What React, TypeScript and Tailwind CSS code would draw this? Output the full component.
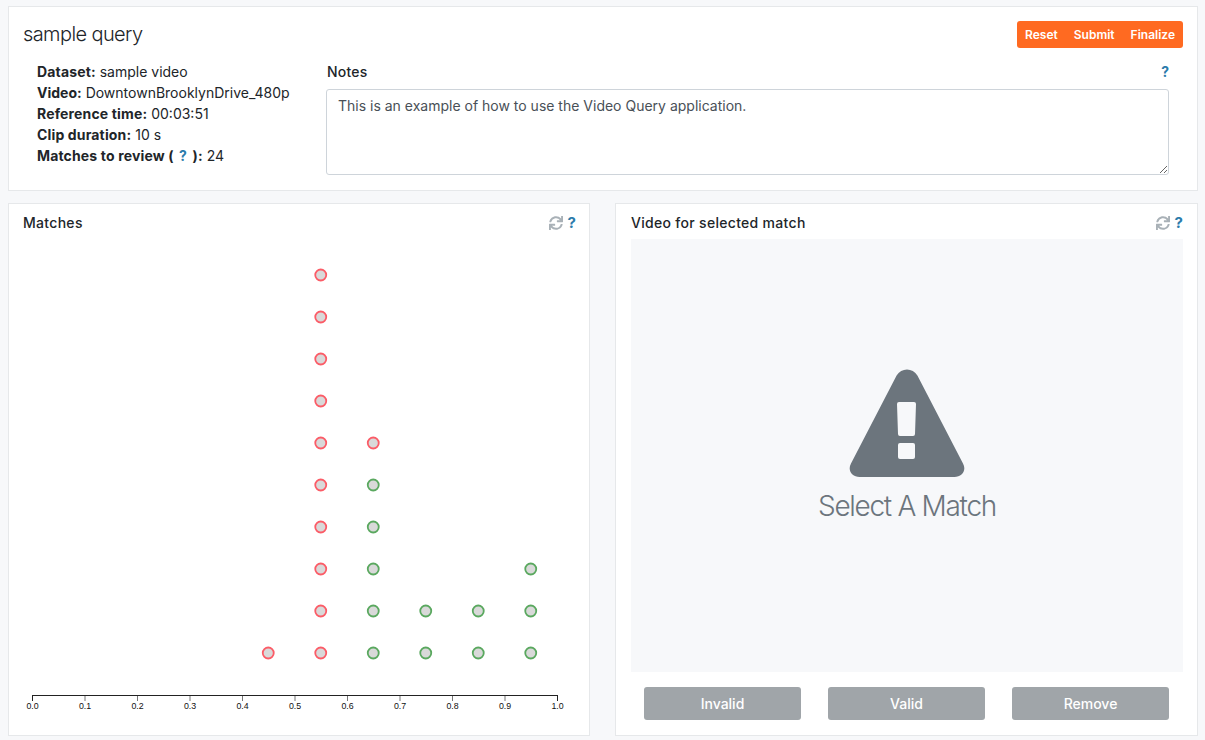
import React from 'react';
import { FaSync } from 'react-icons/fa';

const FONT = 'font-["Inter","Liberation_Sans",sans-serif]';

type Dot = { x: number; y: number; ok: boolean };

const ROW_Y = [653, 611, 569, 527, 485, 443, 401, 359, 317, 275];

const column = (score: number, reds: number[], greens: number[]): Dot[] => [
  ...reds.map((i) => ({ x: score, y: ROW_Y[i], ok: false })),
  ...greens.map((i) => ({ x: score, y: ROW_Y[i], ok: true })),
];

const DOTS: Dot[] = [
  ...column(0.45, [0], []),
  ...column(0.55, [0, 1, 2, 3, 4, 5, 6, 7, 8, 9], []),
  ...column(0.65, [5], [0, 1, 2, 3, 4]),
  ...column(0.75, [], [0, 1]),
  ...column(0.85, [], [0, 1]),
  ...column(0.95, [], [0, 1, 2]),
];

const TICKS = [0, 0.1, 0.2, 0.3, 0.4, 0.5, 0.6, 0.7, 0.8, 0.9, 1];

const Help = () => <span className="font-bold text-[#2b7bab]">?</span>;

const PanelIcons = () => (
  <span className="mt-[2px] flex items-center gap-[5px] text-[15px] leading-[18px]">
    <FaSync className="h-[14px] w-[14px] text-[#a9b1b7]" />
    <Help />
  </span>
);

const Chart = () => (
  <svg width="579" height="497" viewBox="0 0 579 497" className="block">
    {DOTS.map((d) => (
      <circle
        key={`${d.x}-${d.y}`}
        cx={23 + d.x * 525}
        cy={d.y - 239}
        r="5.5"
        fill="#d9d9d9"
        stroke={d.ok ? '#5aa85f' : '#fb5c67'}
        strokeWidth="1.8"
      />
    ))}
    {TICKS.map((t) => (
      <g key={t}>
        <line
          x1={23.5 + t * 525}
          x2={23.5 + t * 525}
          y1="456"
          y2="462"
          stroke={t === 0 || t === 1 ? '#222' : '#777'}
        />
        <text
          x={23.5 + t * 525}
          y="470"
          fontSize="8.8"
          textAnchor="middle"
          fill="#111"
          fontFamily="Liberation Sans, sans-serif"
        >
          {t.toFixed(1)}
        </text>
      </g>
    ))}
    <path d="M23 456.5H549" stroke="#222" strokeWidth="1" />
  </svg>
);

const WarningIcon = () => (
  <svg width="116" height="108" viewBox="0 0 116 108" className="block">
    <path
      d="M47.6 6.5c4.6-8 16.2-8 20.8 0l45.6 88c3.8 6.6-1 13.5-8.6 13.5H10.6C3 108-1.8 101.1 2 94.5z"
      fill="#6c757d"
    />
    <path d="M49.5 33h15.5a2 2 0 0 1 2 2l-1 30a2 2 0 0 1-2 2h-13a2 2 0 0 1-2-2l-1-30a2 2 0 0 1 2-2z" fill="#f7f8fa" />
    <rect x="49" y="74" width="17" height="16" rx="2" fill="#f7f8fa" />
  </svg>
);

const ReviewButton = ({ label }: { label: string }) => (
  <button className="h-[33px] w-[157px] rounded-[3px] bg-[#a0a5a9] text-sm font-medium text-white">
    {label}
  </button>
);

export default function App() {
  return (
    <div className={`${FONT} flex h-[740px] w-[1205px] flex-col gap-[12px] overflow-hidden bg-[#f7f8fa] pl-2 pr-[7px] pt-[6px] text-[14px] text-[#212529]`}>
      {/* Query header */}
      <section className="h-[185px] border border-[#e6e8ea] bg-white pl-[14px] pr-[14px] pt-[14px]">
        <div className="flex items-center justify-between">
          <h1 className="text-[20px] font-light leading-[27px] tracking-[-0.6px]">sample query</h1>
          <div className="flex h-[27px] items-center gap-[16px] rounded-[3px] bg-[#ff6a21] px-2 text-[12px] font-semibold text-white">
            <span>Reset</span>
            <span>Submit</span>
            <span>Finalize</span>
          </div>
        </div>
        <div className="mt-[13px] flex">
          <div className="w-[303px] shrink-0 pl-[14px] leading-[21px]">
            <p><b className="font-bold tracking-[0.15px]">Dataset:</b> sample video</p>
            <p><b className="font-bold">Video:</b> DowntownBrooklynDrive_480p</p>
            <p><b className="font-bold tracking-[0.15px]">Reference time:</b> 00:03:51</p>
            <p><b className="font-bold tracking-[0.15px]">Clip duration:</b> 10 s</p>
            <p>
              <b className="font-bold tracking-[0.15px]">Matches to review ( <span className="mx-[2px]"><Help /></span> ):</b> 24
            </p>
          </div>
          <div className="w-[843px]">
            <div className="flex justify-between pl-px leading-[21px]">
              <span className="font-medium tracking-[0.2px]">Notes</span>
              <Help />
            </div>
            <textarea
              readOnly
              className="mt-[7px] block h-[86px] w-full rounded-[3px] border border-[#ced4da] px-[11px] py-[5px] text-[14px] leading-[21px] text-[#495057]"
              defaultValue="This is an example of how to use the Video Query application."
            />
          </div>
        </div>
      </section>

      <div className="grid grid-cols-[582px_583px] gap-[25px]">
        {/* Matches chart */}
        <section className="h-[533px] border border-[#e6e8ea] bg-white">
          <div className="flex h-[35px] items-start justify-between pl-[14px] pr-[13px] pt-[8px]">
            <span className="font-medium leading-[21px] tracking-[0.3px]">Matches</span>
            <PanelIcons />
          </div>
          <Chart />
        </section>

        {/* Selected match video */}
        <section className="h-[533px] border border-[#e6e8ea] bg-white pl-[15px] pr-[14px]">
          <div className="flex h-[35px] items-start justify-between pt-[8px]">
            <span className="font-medium leading-[21px] tracking-[0.3px]">Video for selected match</span>
            <PanelIcons />
          </div>
          <div className="flex h-[433px] flex-col items-center bg-[#f7f8fa] pt-[130px]">
            <WarningIcon />
            <span className="mt-[9px] text-[28px] font-light leading-[40px] tracking-[-1.3px] text-[#6c757d]">Select A Match</span>
          </div>
          <div className="mt-[15px] flex justify-between pl-[13px] pr-[14px]">
            <ReviewButton label="Invalid" />
            <ReviewButton label="Valid" />
            <ReviewButton label="Remove" />
          </div>
        </section>
      </div>
    </div>
  );
}
